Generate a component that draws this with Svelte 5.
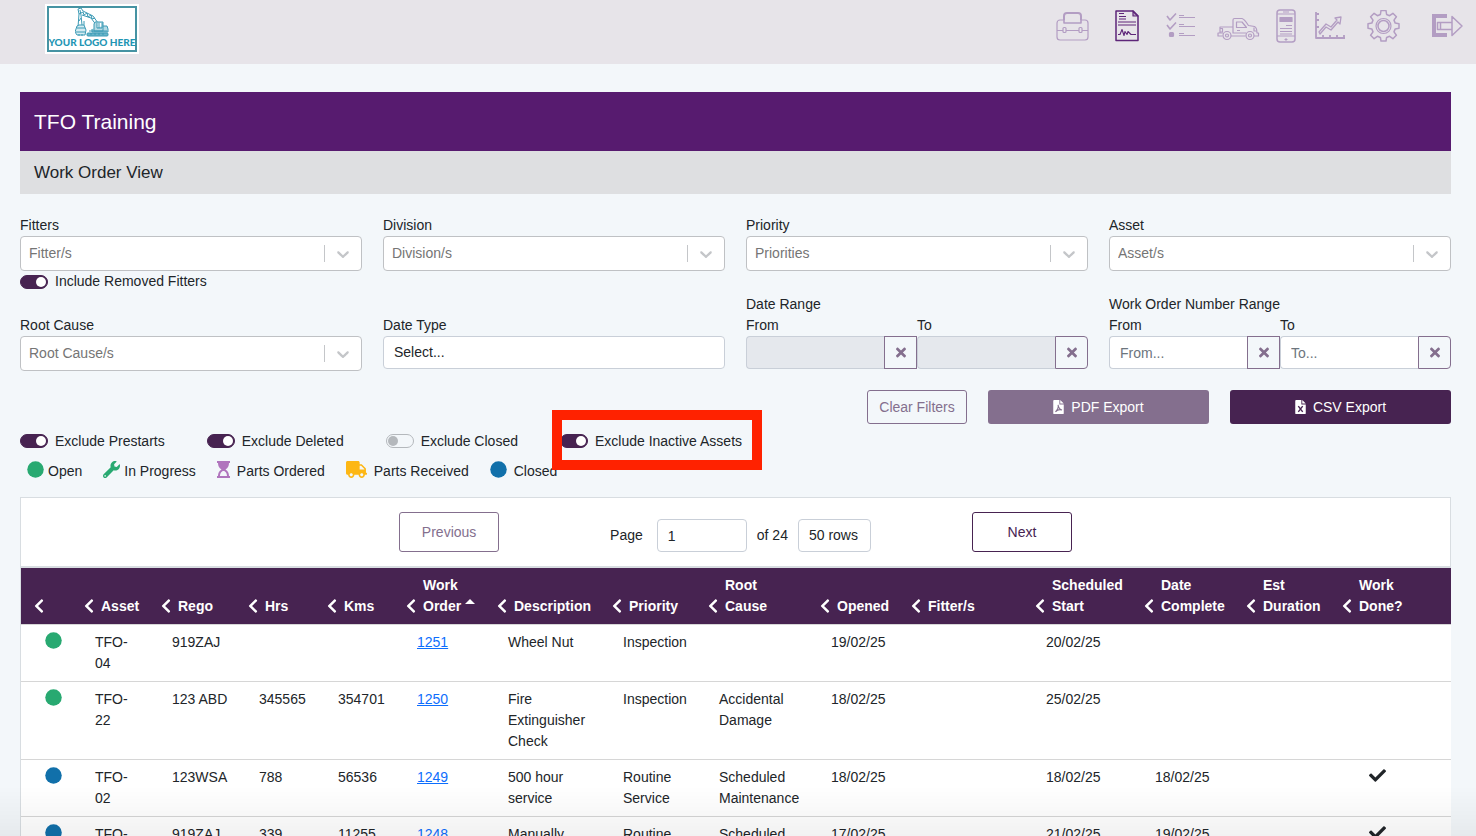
<script lang="ts">
	type Column = { label: string; width: number; sorted?: boolean };
	type WorkOrder = {
		status: 'open' | 'closed';
		asset: string;
		rego: string;
		hrs: string;
		kms: string;
		number: string;
		description: string;
		priority: string;
		rootCause: string;
		opened: string;
		fitters: string;
		start: string;
		complete: string;
		duration: string;
		done: boolean;
	};

	const columns: Column[] = [
		{ label: '', width: 50 },
		{ label: 'Asset', width: 77 },
		{ label: 'Rego', width: 87 },
		{ label: 'Hrs', width: 79 },
		{ label: 'Kms', width: 79 },
		{ label: 'Work\nOrder', width: 91, sorted: true },
		{ label: 'Description', width: 115 },
		{ label: 'Priority', width: 96 },
		{ label: 'Root\nCause', width: 112 },
		{ label: 'Opened', width: 91 },
		{ label: 'Fitter/s', width: 124 },
		{ label: 'Scheduled\nStart', width: 109 },
		{ label: 'Date\nComplete', width: 102 },
		{ label: 'Est\nDuration', width: 96 },
		{ label: 'Work\nDone?', width: 122 }
	];
	const totalWidth = columns.reduce((sum, c) => sum + c.width, 0);

	const orders: WorkOrder[] = [
		{ status: 'open', asset: 'TFO-04', rego: '919ZAJ', hrs: '', kms: '', number: '1251', description: 'Wheel Nut', priority: 'Inspection', rootCause: '', opened: '19/02/25', fitters: '', start: '20/02/25', complete: '', duration: '', done: false },
		{ status: 'open', asset: 'TFO-22', rego: '123 ABD', hrs: '345565', kms: '354701', number: '1250', description: 'Fire Extinguisher Check', priority: 'Inspection', rootCause: 'Accidental Damage', opened: '18/02/25', fitters: '', start: '25/02/25', complete: '', duration: '', done: false },
		{ status: 'closed', asset: 'TFO-02', rego: '123WSA', hrs: '788', kms: '56536', number: '1249', description: '500 hour service', priority: 'Routine Service', rootCause: 'Scheduled Maintenance', opened: '18/02/25', fitters: '', start: '18/02/25', complete: '18/02/25', duration: '', done: true },
		{ status: 'closed', asset: 'TFO-04', rego: '919ZAJ', hrs: '339', kms: '11255', number: '1248', description: 'Manually', priority: 'Routine Service', rootCause: 'Scheduled Maintenance', opened: '17/02/25', fitters: '', start: '21/02/25', complete: '19/02/25', duration: '', done: true }
	];

	let includeRemoved = $state(true);
	let page = $state('1');
	let woFrom = $state('');
	let woTo = $state('');
	let toggles = $state([
		{ label: 'Exclude Prestarts', on: true, marked: false },
		{ label: 'Exclude Deleted', on: true, marked: false },
		{ label: 'Exclude Closed', on: false, marked: false },
		{ label: 'Exclude Inactive Assets', on: true, marked: true }
	]);
</script>

{#snippet combo(id: string, label: string, placeholder: string)}
	<label for={id}>{label}</label>
	<div class="combo">
		<select {id}>
			<option>{placeholder}</option>
		</select>
		<span class="separator"></span>
		<svg viewBox="0 0 20 20" width="20" height="20"><path fill="currentColor" d="M4.516 7.548c.436-.446 1.043-.481 1.576 0L10 11.295l3.908-3.747c.533-.481 1.141-.446 1.574 0 .436.445.408 1.197 0 1.615-.406.418-4.695 4.502-4.695 4.502a1.095 1.095 0 0 1-1.574 0S4.924 9.581 4.516 9.163s-.436-1.17 0-1.615z" /></svg>
	</div>
{/snippet}

{#snippet cross()}
	<svg viewBox="0 0 352 512" width="10" height="15"><path fill="currentColor" d="M242.72 256l100.07-100.07c12.28-12.28 12.28-32.19 0-44.48l-22.24-22.24c-12.28-12.28-32.19-12.28-44.48 0L176 189.28 75.93 89.21c-12.28-12.28-32.19-12.28-44.48 0L9.21 111.45c-12.28 12.28-12.28 32.19 0 44.48L109.28 256 9.21 356.07c-12.28 12.28-12.28 32.19 0 44.48l22.24 22.24c12.28 12.28 32.2 12.28 44.48 0L176 322.72l100.07 100.07c12.28 12.28 32.2 12.28 44.48 0l22.24-22.24c12.28-12.28 12.28-32.19 0-44.48L242.72 256z" /></svg>
{/snippet}

{#snippet dot(status: string)}
	<svg class={status} viewBox="0 0 17 17" width="17" height="17"><circle cx="8.5" cy="8.5" r="8.25" fill="currentColor" /></svg>
{/snippet}

<div class="page">
	<header>
		<a class="logo" href="#home">
			<span class="logo-frame">
				<svg viewBox="0 0 34 29" width="34" height="29" fill="none" stroke="#3b9ab5" stroke-width="1">
					<path d="M3 19 4 6 3 1l3-1 2 3 10 5 5 7" />
					<path d="M5 2 6 7l1 10M7 7l9 3 6 8M4 6l4-2M6 10 4 13M8 4l1 3 3-2 1 4 3-2 1 4 3-1" />
					<path d="M4 17h5l2 5-1 5H2l-2-3 2-6z" fill="#d5ecf2" />
					<path d="M2 20h8M1 24h9M4 26v2M7 26v2M9 17v-4" />
					<path d="M20 14h8v9h-9v-7zM22 15v5h5v-5M24 15v5M28 18h4l1 3v3H17v-3" fill="#b5dbe5" />
					<rect x="12" y="25" width="21" height="3" rx="1" fill="#69b5c9" />
					<path d="M14 23h18M15 26h2M19 26h2M23 26h2M27 26h2" />
				</svg>
				<span class="logo-text">YOUR LOGO HERE</span>
			</span>
		</a>
		<nav>
			<a href="#assets" aria-label="Assets">
				<svg width="33" height="32" viewBox="0 0 33 32">
					<path d="M8 10V6a3 3 0 0 1 3-3h11a3 3 0 0 1 3 3v4" stroke-width="2" />
					<path d="M8 9v4h17V9" stroke-width="1.6" />
					<path d="M8 10H4a3 3 0 0 0-3 3v14a3 3 0 0 0 3 3h25a3 3 0 0 0 3-3V13a3 3 0 0 0-3-3h-4" />
					<path d="M1 20.500h6M10 20.500h13M26 20.500h6" />
					<rect x="7" y="17.500" width="3" height="5" rx="1" />
					<rect x="23" y="17.500" width="3" height="5" rx="1" />
				</svg>
			</a>
			<a href="#orders" class="active" aria-label="Work orders">
				<svg width="24" height="32" viewBox="0 0 24 32">
					<path d="M1 1h17l5 5v24.500H1z" stroke-width="1.500" />
					<path d="M18 1v5h5z" fill="#5e2579" fill-opacity=".35" />
					<path d="M4 3.500h5M4 6.500h7M4 9h7M3 12h18M3 15h18" stroke-width="1" />
					<path d="M3 24.500h2l2-5 2 6 1-4 2 3 1-3 2 2 1 1h5" stroke-width="1.100" />
				</svg>
			</a>
			<a href="#checklists" aria-label="Checklists">
				<svg width="30" height="32" viewBox="0 0 30 32">
					<path d="m1 6 3 4 6-6.500M1 15l3 4 6-6.500" stroke-width="1.600" />
					<rect x="3.500" y="22.500" width="4" height="4" rx="1" fill="currentColor" />
					<path d="M13 5.500h5M13 14.500h5M13 23.500h5M13 7.500h16M13 16.500h16M13 25.500h16" stroke-width="1" />
				</svg>
			</a>
			<a href="#fleet" aria-label="Fleet">
				<svg width="43" height="32" viewBox="0 0 43 32">
					<path d="M5.500 26H1v-3h2v-6h13v-7a1.500 1.500 0 0 1 1.500-1.500H25c3 1 5 5 6.500 7l6 1c2 1 2.500 3.500 2.500 6.500h1.500v3H37M14 26h14.500M3 23h3M16 17v6h13" />
					<path d="M19.500 12H25l4.500 5.500h-10zM20 20.500h3M3 18.500h2.500V22H3M37 17.500v3.500h3" />
					<circle cx="10" cy="25.500" r="4" /><circle cx="10" cy="25.500" r="1.500" />
					<circle cx="33" cy="25.500" r="4" /><circle cx="33" cy="25.500" r="1.500" />
				</svg>
			</a>
			<a href="#mobile" aria-label="Mobile">
				<svg width="20" height="34" viewBox="0 0 20 34">
					<rect x="1" y="1" width="18" height="32" rx="3" stroke-width="1.500" />
					<path d="M1 5h18M1 27h18M7 3h6M10 29v3M8.500 30.500h3" stroke-width="1" />
					<rect x="4" y="8.500" width="12" height="4" fill="currentColor" />
					<path d="M10 16.500h6M4 19.500h12M4 22.500h12M4 25h12" stroke-width="1" />
				</svg>
			</a>
			<a href="#reports" aria-label="Reports">
				<svg width="32" height="32" viewBox="0 0 32 32">
					<path d="M2 2v26h29M2 4h3M2 10h3M2 17h3M9 28v-3M16 28v-3M23 28v-3M30 28v-3" stroke-width="1.800" />
					<path d="m5 22 7-8 5 3 6-7-2-2 6-1-1 7-2-2-7 8-5-3-6 7z" stroke-width="1.300" />
				</svg>
			</a>
			<a href="#settings" aria-label="Settings">
				<svg width="33" height="33" viewBox="0 1 33 33">
					<path stroke-width="1.500" d="M14 1.500h5l.6 4 3 1.200 3.300-2.400 3.500 3.500-2.400 3.300 1.200 3 3.800.6v4.600l-3.800.6-1.200 3 2.400 3.300-3.500 3.500-3.300-2.400-3 1.200-.6 3.500h-5l-.6-3.500-3-1.200-3.300 2.400-3.500-3.500L6 22.900l-1.200-3-3.800-.6v-4.600l3.800-.6 1.200-3-2.400-3.300 3.500-3.500 3.300 2.400 3-1.200z" />
					<circle cx="16.500" cy="17" r="7.500" /><circle cx="16.500" cy="17" r="5.500" stroke-width="1.500" />
				</svg>
			</a>
			<a href="#logout" aria-label="Log out">
				<svg width="33" height="32" viewBox="0 0 33 32">
					<path d="M16 6H3v19h13" stroke-width="4" stroke-linejoin="miter" />
					<path d="M6.500 12.500H21V6.500l10 9.500-10 9.500v-6H6.500zM9.500 12.500v7M21 12.500v7" stroke-width="1.500" fill="#e7e4e9" />
				</svg>
			</a>
		</nav>
	</header>

	<main>
		<h1>TFO Training</h1>
		<h2>Work Order View</h2>

		<div class="filters">
			<div>
				{@render combo('fitters', 'Fitters', 'Fitter/s')}
				<label class="toggle">
					<input type="checkbox" bind:checked={includeRemoved} />
					Include Removed Fitters
				</label>
			</div>
			<div>{@render combo('division', 'Division', 'Division/s')}</div>
			<div>{@render combo('priority', 'Priority', 'Priorities')}</div>
			<div>{@render combo('asset', 'Asset', 'Asset/s')}</div>

			<div class="lower">{@render combo('root-cause', 'Root Cause', 'Root Cause/s')}</div>
			<div class="lower">
				<label for="date-type">Date Type</label>
				<select id="date-type" class="control">
					<option>Select...</option>
				</select>
			</div>
			<fieldset>
				<legend>Date Range</legend>
				<div class="range">
					<label for="date-from">From</label>
					<label for="date-to">To</label>
					<div class="group">
						<input id="date-from" class="control" type="text" disabled />
						<button type="button" aria-label="Clear from date">{@render cross()}</button>
					</div>
					<div class="group">
						<input id="date-to" class="control" type="text" disabled />
						<button type="button" aria-label="Clear to date">{@render cross()}</button>
					</div>
				</div>
			</fieldset>
			<fieldset>
				<legend>Work Order Number Range</legend>
				<div class="range">
					<label for="wo-from">From</label>
					<label for="wo-to">To</label>
					<div class="group">
						<input id="wo-from" class="control" type="text" placeholder="From..." bind:value={woFrom} />
						<button type="button" aria-label="Clear from number" onclick={() => (woFrom = '')}>{@render cross()}</button>
					</div>
					<div class="group">
						<input id="wo-to" class="control" type="text" placeholder="To..." bind:value={woTo} />
						<button type="button" aria-label="Clear to number" onclick={() => (woTo = '')}>{@render cross()}</button>
					</div>
				</div>
			</fieldset>
		</div>

		<div class="exports">
			<button type="button" class="outline clear">Clear Filters</button>
			<button type="button" class="solid pdf">
				<svg viewBox="0 0 12 16" width="11" height="14"><path fill="currentColor" fill-rule="evenodd" d="M1 0h6v5h5v10a1 1 0 0 1-1 1H1a1 1 0 0 1-1-1V1a1 1 0 0 1 1-1zM8 0l4 4H8z" /><path fill="none" stroke="#846f8e" stroke-width="1.200" d="M5.500 5.500c.8 3-1 6-3 8 2-2 5-3 7.500-2-2-.5-4-3-4.500-6z" /></svg>
				PDF Export
			</button>
			<button type="button" class="solid">
				<svg viewBox="0 0 12 16" width="11" height="14"><path fill="currentColor" fill-rule="evenodd" d="M1 0h6v5h5v10a1 1 0 0 1-1 1H1a1 1 0 0 1-1-1V1a1 1 0 0 1 1-1zM8 0l4 4H8z" /><path fill="none" stroke="#472351" stroke-width="1.600" d="m3.500 7 5 6.500M8.500 7l-5 6.500" /></svg>
				CSV Export
			</button>
		</div>

		<div class="toggles">
			{#each toggles as toggle (toggle.label)}
				<label class="toggle" class:marked={toggle.marked}>
					<input type="checkbox" bind:checked={toggle.on} />
					{toggle.label}
				</label>
			{/each}
		</div>

		<ul class="statuses">
			<li class="tight">{@render dot('open')} Open</li>
			<li class="tight">
				<svg class="open" viewBox="0 0 512 512" width="17" height="17"><path fill="currentColor" d="M507.73 109.1c-2.24-9.03-13.54-12.09-20.12-5.51l-74.36 74.36-67.88-11.31-11.31-67.88 74.36-74.36c6.62-6.62 3.43-17.9-5.66-20.16-47.38-11.74-99.55.91-136.58 37.93-39.64 39.64-50.55 97.1-34.05 147.2L18.74 402.76c-24.99 24.99-24.99 65.51 0 90.5 24.99 24.99 65.51 24.99 90.5 0l213.21-213.21c50.12 16.71 107.47 5.68 147.37-34.22 37.07-37.07 49.7-89.32 37.91-136.73zM64 472c-13.25 0-24-10.75-24-24 0-13.26 10.75-24 24-24s24 10.74 24 24c0 13.25-10.75 24-24 24z" /></svg>
				In Progress
			</li>
			<li>
				<svg class="ordered" viewBox="0 0 13 17" width="13" height="17"><path fill="currentColor" fill-rule="evenodd" d="M0 0h13v2h-1c0 3-1 5-3.500 6.500C11 10 12 12 12 15h1v2H0v-2h1c0-3 1-5 3.500-6.500C2 7 1 5 1 2H0zM3 15h7c0-2.500-1.500-5-3.500-5S3 12.500 3 15z" /></svg>
				Parts Ordered
			</li>
			<li>
				<svg class="received" viewBox="0 0 640 512" width="21" height="17"><path fill="currentColor" d="M624 352h-16V243.900c0-12.700-5.100-24.900-14.100-33.900L494 110.100c-9-9-21.200-14.100-33.900-14.100H416V48c0-26.500-21.500-48-48-48H48C21.500 0 0 21.500 0 48v320c0 26.500 21.500 48 48 48h16c0 53 43 96 96 96s96-43 96-96h128c0 53 43 96 96 96s96-43 96-96h48c8.800 0 16-7.200 16-16v-32c0-8.800-7.200-16-16-16zM160 464c-26.500 0-48-21.500-48-48s21.500-48 48-48 48 21.500 48 48-21.500 48-48 48zm320 0c-26.500 0-48-21.500-48-48s21.500-48 48-48 48 21.500 48 48-21.500 48-48 48zm80-208H416V144h44.100l99.900 99.900V256z" /></svg>
				Parts Received
			</li>
			<li>{@render dot('closed')} Closed</li>
		</ul>

		<div class="pager">
			<button type="button" class="outline">Previous</button>
			<div class="pages">
				<label for="page">Page</label>
				<input id="page" class="control" type="text" bind:value={page} />
				<span>of 24</span>
				<select class="control" aria-label="Rows per page">
					<option>50 rows</option>
				</select>
			</div>
			<button type="button" class="outline next">Next</button>
		</div>

		<table>
			<colgroup>
				{#each columns as column}
					<col style:width="{(column.width / totalWidth) * 100}%" />
				{/each}
			</colgroup>
			<thead>
				<tr>
					{#each columns as column}
						<th>
							<span class="head">
								<svg viewBox="0 0 320 512" width="10" height="16"><path fill="currentColor" d="M34.520 239.030L228.870 44.690c9.370-9.370 24.570-9.370 33.940 0l22.670 22.670c9.360 9.360 9.370 24.520.040 33.900L131.490 256l154.020 154.750c9.340 9.380 9.320 24.540-.040 33.900l-22.670 22.670c-9.370 9.370-24.570 9.370-33.940 0L34.520 272.970c-9.370-9.370-9.370-24.570 0-33.940z" /></svg>
								<span class="name">{column.label}{#if column.sorted}<i class="caret"></i>{/if}</span>
							</span>
						</th>
					{/each}
				</tr>
			</thead>
			<tbody>
				{#each orders as order (order.number)}
					<tr>
						<td>{@render dot(order.status)}</td>
						<td>{order.asset}</td>
						<td>{order.rego}</td>
						<td>{order.hrs}</td>
						<td>{order.kms}</td>
						<td><a href="#order-{order.number}">{order.number}</a></td>
						<td>{order.description}</td>
						<td>{order.priority}</td>
						<td>{order.rootCause}</td>
						<td>{order.opened}</td>
						<td>{order.fitters}</td>
						<td>{order.start}</td>
						<td>{order.complete}</td>
						<td>{order.duration}</td>
						<td class="done">
							{#if order.done}
								<svg viewBox="0 0 512 512" width="17" height="17"><path fill="currentColor" d="M173.898 439.404l-166.400-166.400c-9.997-9.997-9.997-26.206 0-36.204l36.203-36.204c9.997-9.998 26.207-9.998 36.204 0L192 312.690 432.095 72.596c9.997-9.997 26.207-9.997 36.204 0l36.203 36.204c9.997 9.997 9.997 26.206 0 36.204l-294.400 294.401c-9.998 9.997-26.207 9.997-36.204-.001z" /></svg>
							{/if}
						</td>
					</tr>
				{/each}
			</tbody>
		</table>
	</main>
	<div class="fade"></div>
</div>

<style>
	:global(body) {
		background: #f3f7fa;
	}
	.page,
	.page * {
		box-sizing: border-box;
	}
	.page {
		height: 100vh;
		overflow-y: auto;
		scrollbar-width: none;
		font-family: "Liberation Sans", Arial, sans-serif;
		font-size: 14px;
		line-height: 21px;
		color: #212529;
	}
	svg {
		display: block;
		flex: none;
	}
	button,
	input,
	select {
		font: inherit;
		color: inherit;
		margin: 0;
	}

	header {
		display: flex;
		justify-content: space-between;
		align-items: flex-start;
		height: 64px;
		padding: 4px 12px 0 45px;
		background: #e7e4e9;
	}
	.logo {
		display: block;
		padding: 2px;
		background: #fff;
		text-decoration: none;
	}
	.logo-frame {
		display: flex;
		flex-direction: column;
		align-items: center;
		width: 90px;
		height: 46px;
		border: 2px solid #4693a3;
	}
	.logo-text {
		font-family: Lato, sans-serif;
		font-size: 10px;
		font-weight: 900;
		line-height: 10px;
		white-space: nowrap;
		color: #1f96b4;
	}
	nav {
		display: grid;
		grid-template-columns: 59px 51px 51px 59px 38px 53px 64px 33px;
		align-items: center;
		height: 44px;
	}
	nav a {
		color: #b39dc3;
		justify-self: start;
	}
	nav a.active {
		color: #5e2579;
	}
	nav svg {
		fill: none;
		stroke: currentColor;
		stroke-width: 1.2;
		stroke-linejoin: round;
	}

	main {
		padding: 28px 25px 0 20px;
	}
	h1,
	h2 {
		margin: 0;
		padding: 0 14px;
		font-weight: 400;
	}
	h1 {
		font-size: 21px;
		line-height: 59px;
		background: #571b6f;
		color: #fff;
	}
	h2 {
		font-size: 17px;
		line-height: 43px;
		background: #dedfe1;
	}

	.filters {
		display: grid;
		grid-template-columns: repeat(4, 1fr);
		gap: 2px 21px;
		margin-top: 21px;
	}
	.filters label,
	legend {
		display: block;
		padding: 0;
	}
	.lower {
		padding-top: 21px;
	}
	fieldset {
		min-width: 0;
		margin: 0;
		padding: 0;
		border: 0;
	}
	.combo {
		display: flex;
		align-items: center;
		height: 35px;
		padding-right: 8px;
		border: 1px solid #bfc1c4;
		border-radius: 4px;
		background: #fff;
		color: #c4c6c9;
	}
	.combo select {
		flex: 1;
		min-width: 0;
		height: 33px;
		padding: 0 8px;
		border: 0;
		background: none;
		appearance: none;
		color: #757575;
	}
	.separator {
		width: 1px;
		height: 17px;
		margin-right: 8px;
		background: #c4c6c9;
	}
	.control {
		display: block;
		width: 100%;
		min-width: 0;
		height: 33px;
		padding: 0 10px;
		border: 1px solid #c9cfd8;
		border-radius: 4px;
		background: #fff;
		appearance: none;
	}
	.control::placeholder {
		color: #6c757d;
		opacity: 1;
	}
	.control:disabled {
		background: #e5e8ed;
	}
	.range {
		display: grid;
		grid-template-columns: 1fr 1fr;
	}
	.group {
		display: flex;
	}
	.group .control {
		border-right: 0;
		border-radius: 4px 0 0 4px;
	}
	.group button {
		display: flex;
		flex: none;
		align-items: center;
		justify-content: center;
		width: 33px;
		height: 33px;
		padding: 0;
		border: 1px solid #846f8e;
		background: none;
		color: #846f8e;
	}
	.group:last-child button {
		border-radius: 0 4px 4px 0;
	}

	.toggle,
	.filters .toggle {
		display: flex;
		align-items: center;
		gap: 7px;
	}
	.toggle input {
		flex: none;
		width: 28px;
		height: 14px;
		padding: 1px;
		border: 1px solid #b4b8bc;
		border-radius: 7px;
		appearance: none;
		background: transparent;
	}
	.toggles input {
		margin-bottom: 1px;
	}
	.toggle input::before {
		content: '';
		display: block;
		width: 10px;
		height: 10px;
		border-radius: 50%;
		background: #b4b8bc;
	}
	.toggle input:checked {
		border-color: #472351;
		background: #472351;
	}
	.toggle input:checked::before {
		margin-left: auto;
		background: #fff;
	}

	.exports {
		display: grid;
		grid-template-columns: repeat(6, 1fr);
		gap: 21px;
		margin-top: 19px;
	}
	.exports button {
		height: 34px;
	}
	.outline {
		width: 100px;
		padding: 0;
		border: 1px solid #846f8e;
		border-radius: 3px;
		background: none;
		color: #846f8e;
	}
	.clear {
		grid-column: 4;
		justify-self: end;
	}
	.solid {
		display: flex;
		align-items: center;
		justify-content: center;
		gap: 7px;
		padding: 0;
		border: 0;
		border-radius: 3px;
		background: #472351;
		color: #fff;
	}
	.solid.pdf {
		background: #846f8e;
	}

	.toggles {
		display: flex;
		gap: 42px;
		margin-top: 7px;
	}
	.marked {
		position: relative;
	}
	.marked::after {
		content: '';
		position: absolute;
		inset: -21px -20px -18px -8px;
		border: 10px solid #ff2200;
		pointer-events: none;
	}
	.statuses {
		display: flex;
		gap: 21px;
		margin: 9px 0 15px;
		padding: 0 7px;
		list-style: none;
	}
	.statuses li {
		display: flex;
		align-items: flex-start;
		gap: 7px;
	}
	.statuses .tight {
		gap: 4px;
	}
	.open {
		color: #28a971;
	}
	.closed {
		color: #1170aa;
	}
	.ordered {
		color: #b075bd;
	}
	.received {
		color: #fdb714;
	}

	.pager {
		display: flex;
		align-items: flex-end;
		justify-content: center;
		padding: 14px 0;
		border: 1px solid #d8dde1;
		border-bottom-width: 2px;
		background: #fff;
	}
	.pager .outline {
		height: 40px;
	}
	.pager .next {
		border-color: #472351;
		color: #472351;
	}
	.pages {
		display: flex;
		align-items: center;
		gap: 10px;
		margin: 0 101px 0 111px;
	}
	.pages label {
		margin-right: 4px;
	}
	.pages input {
		width: 90px;
	}
	.pages select {
		width: 73px;
	}

	table {
		width: 100%;
		table-layout: fixed;
		border-collapse: separate;
		border-spacing: 0;
		border-left: 1px solid #d8dde1;
		background: #fff;
	}
	th,
	td {
		border-bottom: 1px solid #d6d6d6;
		text-align: left;
	}
	th {
		padding: 7px 0 7px 13px;
		background: #472351;
		color: #fff;
		vertical-align: bottom;
	}
	td {
		padding: 7px 6px 7px 24px;
		vertical-align: top;
	}
	td.done {
		padding-left: 40px;
	}
	td a {
		color: #0d6efd;
	}
	.head {
		display: flex;
		align-items: flex-end;
		gap: 7px;
	}
	.head svg {
		margin-bottom: 3px;
	}
	.name {
		white-space: pre;
	}
	.caret {
		display: inline-block;
		margin-left: 4px;
		border: 5px solid transparent;
		border-top: 0;
		border-bottom-color: #fff;
		vertical-align: 7px;
	}

	.fade {
		position: fixed;
		inset: auto 0 0;
		height: 50px;
		background: linear-gradient(transparent, rgba(0, 0, 0, 0.05));
		pointer-events: none;
	}
</style>
